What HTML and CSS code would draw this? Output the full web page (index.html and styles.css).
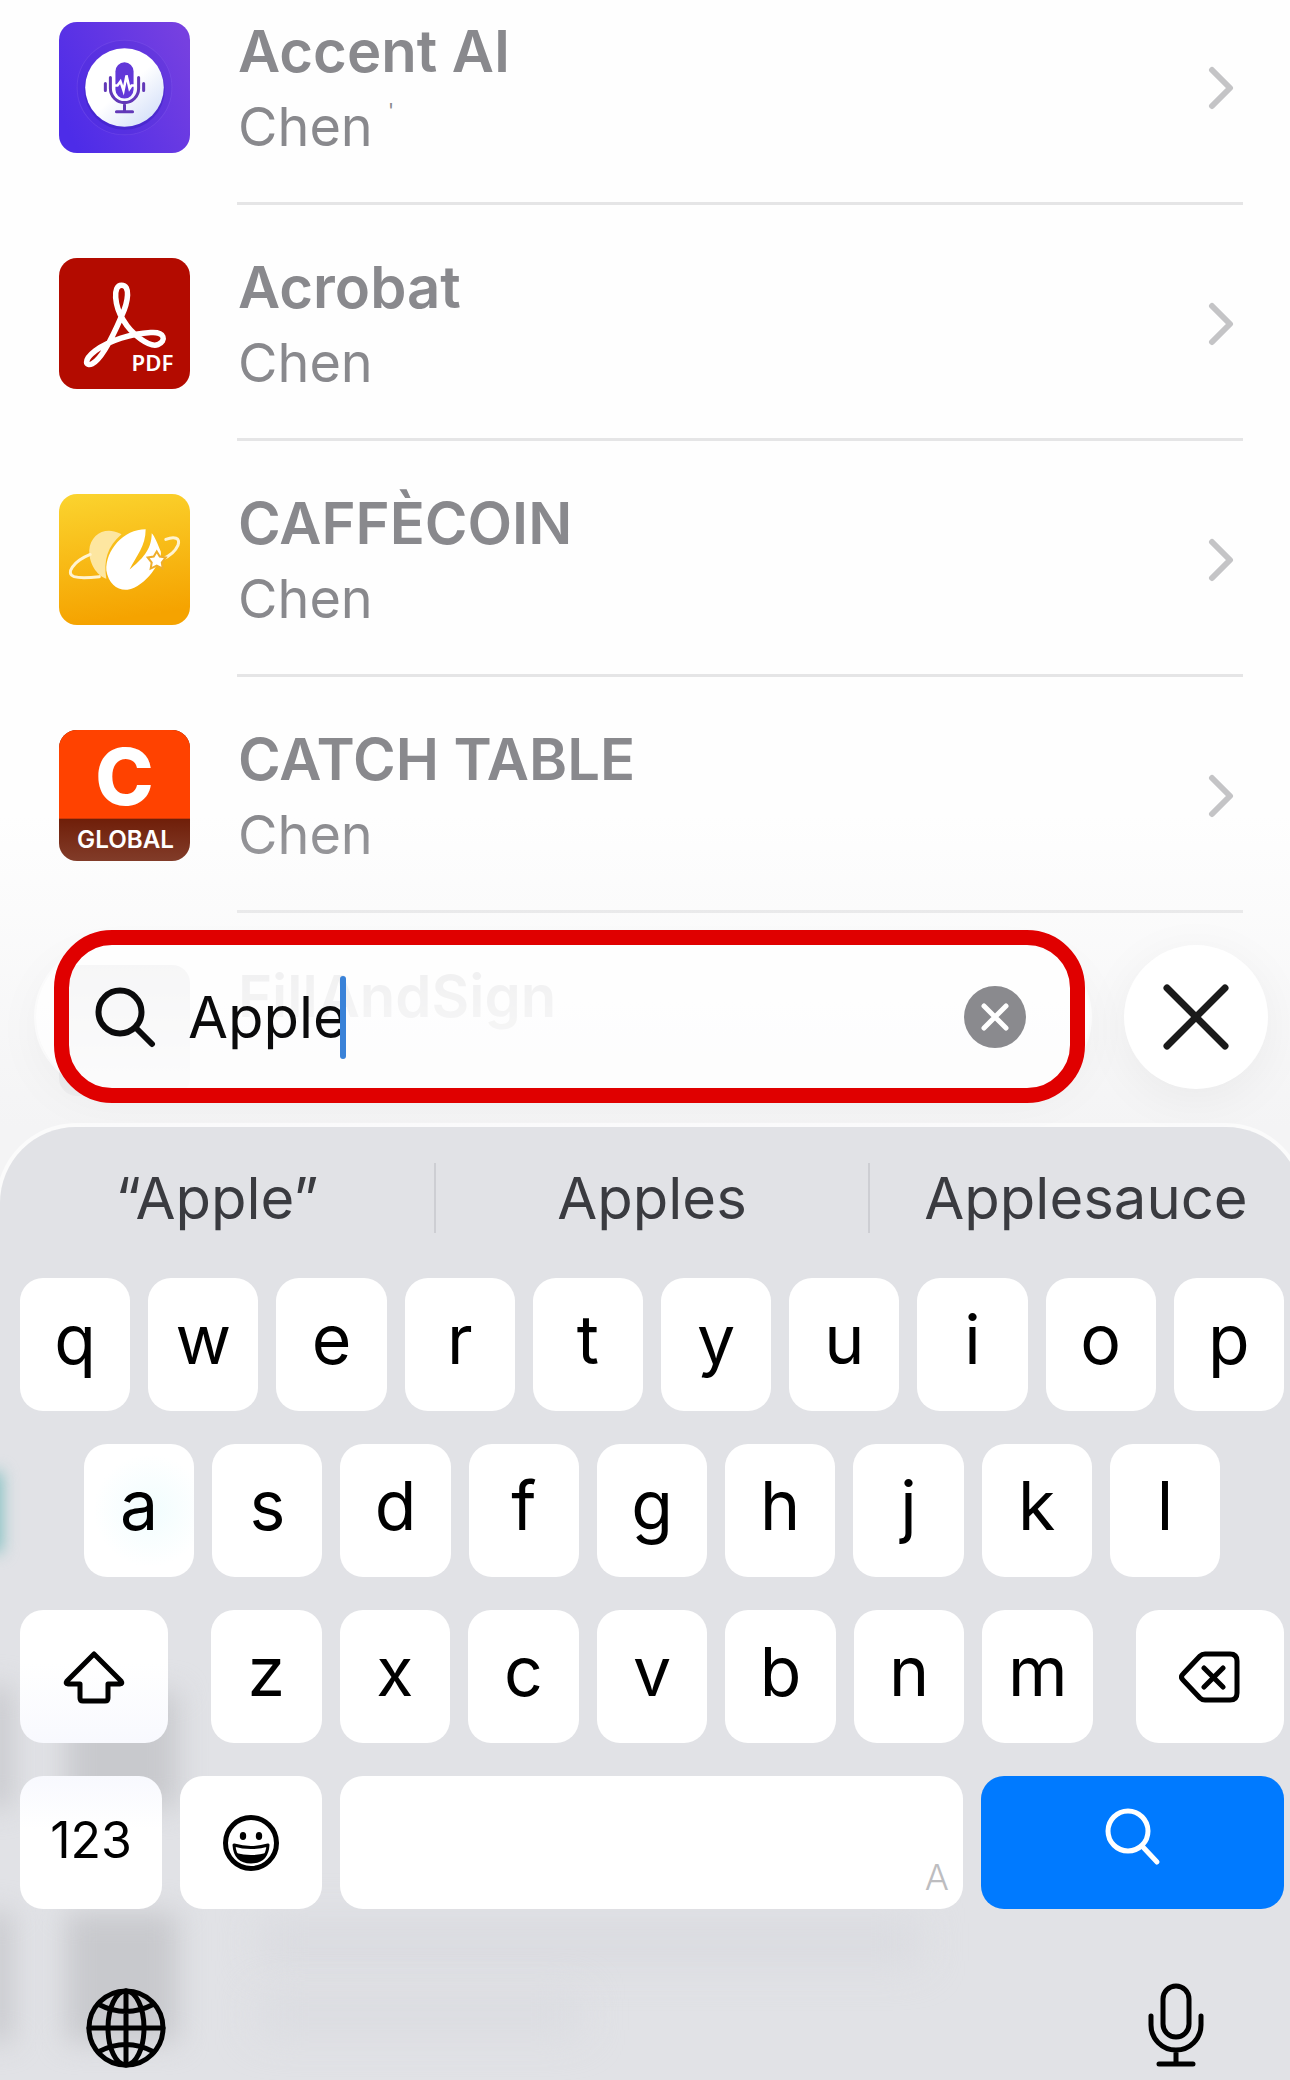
FILE: index.html
```html
<!DOCTYPE html>
<html lang="en">
<head>
<meta charset="utf-8">
<meta name="viewport" content="width=device-width, initial-scale=1">
<title>Search apps</title>
<link rel="stylesheet" href="styles.css">
</head>
<body>
<div class="screen">
  <main class="results">
    <ul class="app-list">
      <li><a class="app" href="#">
        <svg class="app-icon" viewBox="0 0 130 130" aria-hidden="true">
          <defs>
            <linearGradient id="violet" x1="0" y1="0.7" x2="1" y2="0.2"><stop offset="0" stop-color="#4d2ce8"/><stop offset="1" stop-color="#7640e0"/></linearGradient>
            <linearGradient id="pearl" x1="0.2" y1="0.2" x2="0.9" y2="1"><stop offset="0.4" stop-color="#fff"/><stop offset="1" stop-color="#cfdcf8"/></linearGradient>
          </defs>
          <rect width="130" height="130" fill="url(#violet)"/>
          <circle cx="65" cy="65" r="47" fill="#4526d0" fill-opacity=".2" stroke="#8a62ee" stroke-opacity=".3"/>
          <circle cx="65" cy="67" r="40" fill="#3a1fc0" fill-opacity=".5"/>
          <circle cx="65" cy="65" r="39" fill="url(#pearl)"/>
          <rect x="56" y="40" width="18" height="36" rx="9" fill="#6238d8"/>
          <path d="M54 63h4l3-4 3 9 3-15 3 13 2-3h4" fill="none" stroke="#fff" stroke-width="2.5"/>
          <g fill="none" stroke="#6238b8" stroke-width="3" stroke-linecap="round">
            <path d="M51 55v11a14 14 0 0 0 28 0V55M65 80v9M57 89h16M46 61v7M84 61v7"/>
          </g>
        </svg>
        <span class="app-text"><strong>Accent AI</strong><span class="owner">Chen <span class="tick">'</span></span></span>
        <svg class="chevron" viewBox="0 0 26 44" aria-hidden="true"><path d="M4 4l18 18L4 40"/></svg>
      </a></li>
      <li><a class="app" href="#">
        <svg class="app-icon" viewBox="0 0 130 130" aria-hidden="true">
          <rect width="130" height="130" fill="#b30b00"/>
          <path d="M62 27C53 27 55 48 64 62C72 76 90 89 98 86C107 82 105 73 91 74C72 75 50 82 36 92C23 102 27 108 33 105C43 100 56 72 62 58C69 43 71 27 62 27Z" fill="none" stroke="#fff" stroke-width="5.5"/>
          <text x="72" y="112" class="pdf">PDF</text>
        </svg>
        <span class="app-text"><strong>Acrobat</strong><span class="owner">Chen</span></span>
        <svg class="chevron" viewBox="0 0 26 44" aria-hidden="true"><path d="M4 4l18 18L4 40"/></svg>
      </a></li>
      <li><a class="app" href="#">
        <svg class="app-icon" viewBox="0 0 130 130" aria-hidden="true">
          <defs><linearGradient id="amber" x1="0" y1="0" x2="0.15" y2="1"><stop offset="0" stop-color="#fbd42f"/><stop offset="1" stop-color="#f5a300"/></linearGradient></defs>
          <rect width="130" height="130" fill="url(#amber)"/>
          <path d="M60 39C46 32 31 40 30 56C30 72 40 82 47 84C44 66 48 52 62 40Z" fill="#fde6a0"/>
          <path d="M31 60C14 67 6 79 15 82C22 84 31 83 40 82M106 45C114 42 121 43 118 51C115 58 109 62 102 65" fill="none" stroke="#fff3d0" stroke-width="3" stroke-linecap="round"/>
          <path d="M86 35C64 35 46 56 47 76C49 89 58 96 68 95C86 92 103 66 101 57C98 50 95 42 92 39C92 56 82 65 70 75C77 61 86 52 86 35Z" fill="#fff"/>
          <path d="M97 57l3 5 6 1-4 5 1 6-6-3-6 3 1-6-4-5 6-1z" fill="#fff" stroke="#efae2c" stroke-width="2"/>
        </svg>
        <span class="app-text"><strong>CAFFÈCOIN</strong><span class="owner">Chen</span></span>
        <svg class="chevron" viewBox="0 0 26 44" aria-hidden="true"><path d="M4 4l18 18L4 40"/></svg>
      </a></li>
      <li><a class="app" href="#">
        <svg class="app-icon" viewBox="0 0 130 130" aria-hidden="true">
          <rect width="130" height="130" fill="#6e1c06"/>
          <rect width="130" height="88" fill="#ff4200"/>
          <text x="65" y="74" text-anchor="middle" class="big-c">C</text>
          <text x="66" y="117" text-anchor="middle" class="global">GLOBAL</text>
        </svg>
        <span class="app-text"><strong>CATCH TABLE</strong><span class="owner">Chen</span></span>
        <svg class="chevron" viewBox="0 0 26 44" aria-hidden="true"><path d="M4 4l18 18L4 40"/></svg>
      </a></li>
      <li><a class="app app-last" href="#">
        <span class="app-icon blank"></span>
        <span class="app-text"><strong>FillAndSign</strong></span>
      </a></li>
    </ul>
    <form class="dock">
      <div class="search">
        <svg class="glass" viewBox="0 0 62 62" aria-hidden="true"><circle cx="25" cy="26" r="21.5"/><path d="M41 42l16 16"/></svg>
        <input class="query" type="text" value="Apple" aria-label="Search">
        <span class="caret"></span>
        <button class="clear" type="button" aria-label="Clear text"><svg viewBox="0 0 62 62" aria-hidden="true"><path d="M20 20l22 22M42 20L20 42"/></svg></button>
        <span class="highlight"></span>
      </div>
      <button class="close" type="button" aria-label="Close search"><svg viewBox="0 0 70 70" aria-hidden="true"><path d="M6 6l58 58M64 6L6 64"/></svg></button>
    </form>
  </main>

  <section class="keyboard" aria-label="Keyboard">
    <div class="backdrop" aria-hidden="true">
      <span class="smudge smudge-a"></span><span class="smudge smudge-b"></span>
      <span class="smudge smudge-c"></span><span class="smudge smudge-d"></span>
      <span class="smudge smudge-e"></span><span class="smudge smudge-f"></span><span class="smudge smudge-g"></span>
    </div>
    <div class="suggestions">
      <button type="button">“Apple”</button><button type="button">Apples</button><button type="button">Applesauce</button>
    </div>
    <div class="keys">
      <div class="row">
        <button class="key">q</button><button class="key">w</button><button class="key">e</button><button class="key">r</button><button class="key">t</button><button class="key">y</button><button class="key">u</button><button class="key">i</button><button class="key">o</button><button class="key">p</button>
      </div>
      <div class="row row-home">
        <button class="key tinted">a</button><button class="key">s</button><button class="key">d</button><button class="key">f</button><button class="key">g</button><button class="key">h</button><button class="key">j</button><button class="key">k</button><button class="key">l</button>
      </div>
      <div class="row row-shift">
        <button class="key wide shaded" aria-label="Shift"><svg width="62" height="54" viewBox="0 0 62 54" aria-hidden="true"><path d="M31 4L4 31q-2 3 1 3h12v14q0 3 3 3h22q3 0 3-3V34h12q3 0 1-3z"/></svg></button>
        <div class="row letters">
          <button class="key">z</button><button class="key">x</button><button class="key">c</button><button class="key">v</button><button class="key">b</button><button class="key">n</button><button class="key">m</button>
        </div>
        <button class="key wide" aria-label="Delete"><svg width="62" height="54" viewBox="0 0 62 54" aria-hidden="true"><path d="M26 4h25q7 0 7 7v32q0 7-7 7H26q-3 0-5-2L4 30q-3-3 0-6L21 6q2-2 5-2zM25 18l19 19M44 18L25 37"/></svg></button>
      </div>
      <div class="row">
        <button class="key mode numbers shaded-top">123</button>
        <button class="key mode" aria-label="Emoji"><svg width="58" height="58" viewBox="0 0 58 58" aria-hidden="true"><circle cx="29" cy="29" r="25.5"/><ellipse class="solid" cx="21" cy="22" rx="3.2" ry="4"/><ellipse class="solid" cx="37" cy="22" rx="3.2" ry="4"/><path class="thin" d="M12 31q17 5 34 0q-1 17-17 17T12 31z"/><path class="solid" d="M14 39q15 4 30 0q-4 9-15 9T14 39z"/></svg></button>
        <button class="key space" aria-label="Space"><span>A</span></button>
        <button class="key go" aria-label="Search"><svg width="58" height="60" viewBox="0 0 58 60" aria-hidden="true"><circle cx="24" cy="24" r="20"/><path d="M38 39l15 16"/></svg></button>
      </div>
    </div>
    <div class="toolbar">
      <button type="button" aria-label="Next keyboard"><svg width="80" height="80" viewBox="0 0 80 80" aria-hidden="true"><circle cx="40" cy="40" r="37"/><ellipse cx="40" cy="40" rx="18" ry="37"/><path d="M40 3v74M3 40h74M12 16q28 15 56 0M12 64q28-15 56 0"/></svg></button>
      <button type="button" aria-label="Dictate"><svg width="58" height="86" viewBox="0 0 58 86" aria-hidden="true"><rect x="16" y="4" width="26" height="51" rx="13"/><path d="M4 34v9a25 25 0 0 0 50 0v-9M29 68v14M12 82h34"/></svg></button>
    </div>
  </section>
</div>
</body>
</html>
```

FILE: styles.css
```css
* { box-sizing: border-box; }
body { margin: 0; background: #f4f4f5; font-family: Inter, "Liberation Sans", sans-serif; }
button { margin: 0; padding: 0; border: 0; background: none; font: inherit; color: inherit; }
.screen { overflow: hidden; }

/* Results list, scrolled a little past its top */
.results { position: relative; overflow: hidden; background: #fefefe; }
.app-list { list-style: none; margin: -31px 0 0; padding: 0; }
.app { display: flex; align-items: center; height: 236px; padding-left: 59px; text-decoration: none; color: #89898d; position: relative; }
.app::after { content: ""; position: absolute; left: 237px; right: 47px; bottom: 0; height: 3px; background: #e5e5e6; }
.app-last { height: 214px; }
.app-last::after { display: none; }
.app-icon { flex: none; width: 131px; height: 131px; border-radius: 18px; }
.blank { background: #bcbcc2; margin-top: 20px; }
.app-text { flex: 1; margin-left: 48px; padding-top: 4px; display: flex; flex-direction: column; }
.app-text strong { font-size: 58px; font-weight: 600; line-height: 75px; }
.owner { height: 75px; font-size: 54px; line-height: 75px; }
.app-last .app-text { align-self: flex-start; padding-top: 46px; }
.tick { display: inline-block; font-size: 20px; line-height: 20px; vertical-align: top; padding-top: 12px; }
.chevron { width: 26px; height: 44px; margin: 2px 56px 0 0; fill: none; stroke: #c4c4c6; stroke-width: 6; stroke-linecap: round; stroke-linejoin: round; }
.pdf { font: 600 22px "Noto Sans", sans-serif; fill: #fff; }
.big-c { font: 800 78px Inter, sans-serif; fill: #fff; }
.global { font: 600 24px Inter, sans-serif; fill: #fff; }

/* Search bar over the list */
.dock { position: absolute; left: 0; right: 0; bottom: 0; display: flex; gap: 34px; align-items: flex-end; padding: 130px 22px 38px 36px; background: linear-gradient(rgba(244,244,245,0), rgba(244,244,245,.8) 80%, #f4f4f5); }
.search { position: relative; flex: 1; height: 144px; display: flex; align-items: center; padding: 0 64px 0 59px; border-radius: 72px; background: rgba(255,255,255,.78); box-shadow: 0 0 0 2px rgba(255,255,255,.6), 0 12px 50px rgba(0,0,0,.04); }
.glass { width: 62px; height: 62px; fill: none; stroke: #0b0b0c; stroke-width: 6; stroke-linecap: round; }
.query { width: 152px; margin: 0 0 0 31px; padding: 0; border: 0; outline: 0; background: none; font: 400 58px Inter, sans-serif; line-height: 80px; color: #0b0b0c; }
.caret { width: 6px; height: 83px; border-radius: 3px; background: #3a82d8; }
.clear { width: 62px; height: 62px; margin-left: auto; border-radius: 50%; background: #8a8a8e; }
.clear svg { display: block; stroke: #fff; stroke-width: 5; stroke-linecap: round; }
.highlight { position: absolute; inset: -15px 5px -14px 18px; border: 15px solid #e00000; border-radius: 58px; pointer-events: none; }
.close { flex: none; width: 144px; height: 144px; border-radius: 50%; background: #fff; display: flex; align-items: center; justify-content: center; box-shadow: 0 10px 50px rgba(0,0,0,.05); }
.close svg { width: 70px; height: 70px; stroke: #1a1a1a; stroke-width: 7; stroke-linecap: round; }

/* Keyboard sheet, running slightly past the right edge */
.keyboard { position: relative; margin: 0 -12px 0 0; border-radius: 76px 76px 0 0; background: #e1e2e6; box-shadow: 0 0 0 4px rgba(255,255,255,.6); overflow: hidden; }
.suggestions { position: relative; display: grid; grid-template-columns: repeat(3, 1fr); padding: 36px 0 45px; }
.suggestions button { height: 70px; font-size: 58px; line-height: 70px; color: #3a3b40; }
.suggestions button + button { border-left: 2px solid #cdced3; }
.keys { position: relative; display: flex; flex-direction: column; gap: 33px; padding: 0 18px 0 20px; }
.row { display: flex; gap: 18px; }
.row-home { padding: 0 64px; }
.row-shift { gap: 43px; }
.letters { flex: 1; }
.key { flex: 1; min-width: 0; height: 133px; padding-bottom: 12px; border-radius: 23px; background: #fff; color: #000; font-size: 68px; line-height: 80px; }
.key svg { display: block; margin: 12px auto 0; fill: none; stroke: #000; stroke-width: 5; stroke-linecap: round; stroke-linejoin: round; }
.key svg .solid { fill: #000; stroke: none; }
.key svg .thin { stroke-width: 3; }
.tinted { background: radial-gradient(circle at 60% 50%, #f1fdfe, #fff 60%); }
.shaded { background: linear-gradient(#fff 40%, #f8f9fe); }
.shaded-top { background: linear-gradient(#f8f9fe, #fff 40%); }
.wide { flex: 0 0 148px; }
.mode { flex: 0 0 142px; }
.numbers { font-size: 50px; padding-bottom: 6px; }
.space { display: flex; align-items: flex-end; justify-content: flex-end; padding: 0 14px 14px; }
.space span { font-size: 36px; font-weight: 300; line-height: 36px; color: #bdbdc0; }
.go { flex: 0 0 303px; background: #007aff; }
.go svg { margin-top: 0; stroke: #fff; }
.toolbar { position: relative; display: flex; justify-content: space-between; align-items: flex-end; padding: 73px 97px 14px 86px; }
.toolbar button { display: block; }
.toolbar svg { display: block; fill: none; stroke: #000; stroke-width: 5; stroke-linecap: round; }

/* List content showing softly through the keyboard */
.smudge { position: absolute; background: #c8c9cd; filter: blur(14px); }
.smudge-a { left: 66px; top: 565px; width: 112px; height: 115px; }
.smudge-b { left: 66px; top: 785px; width: 112px; height: 130px; }
.smudge-c { left: -18px; top: 560px; width: 30px; height: 120px; }
.smudge-d { left: -18px; top: 785px; width: 30px; height: 130px; }
.smudge-e { left: 260px; top: 795px; width: 660px; height: 40px; background: #d9dadf; filter: blur(20px); }
.smudge-f { left: 260px; top: 870px; width: 320px; height: 35px; background: #dadbe0; filter: blur(20px); }
.smudge-g { left: -16px; top: 345px; width: 18px; height: 80px; background: #7fbfc0; filter: blur(8px); }
```
